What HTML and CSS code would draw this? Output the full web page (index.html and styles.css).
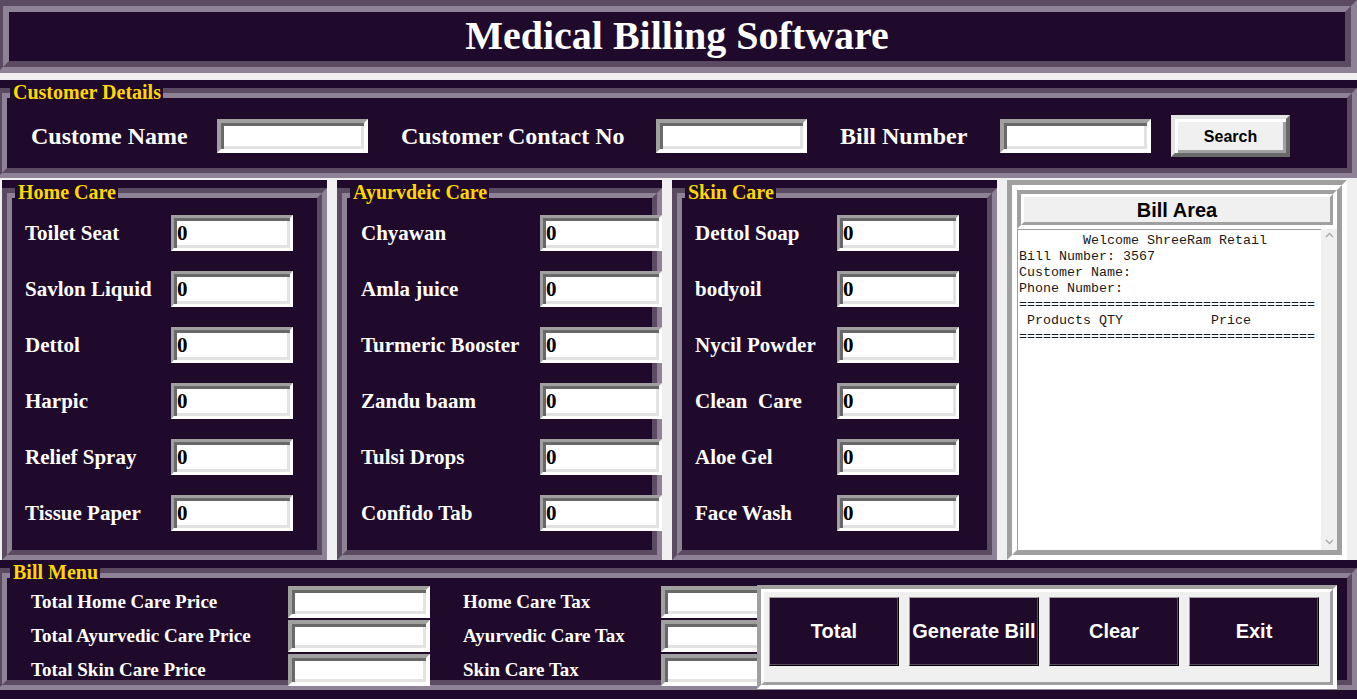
FILE: index.html
```html
<!DOCTYPE html>
<html>
<head>
<meta charset="utf-8">
<title>Medical Billing Software</title>
<link rel="stylesheet" href="styles.css">
</head>
<body>
<div class="app">
  <header class="title"><div class="title-in">Medical Billing Software</div></header>

  <section class="lf cust">
    <span class="lf-label">Customer Details</span>
    <div class="g-out"><div class="g-in cust-row">
      <span class="c-lbl c-l1">Custome Name</span><input class="ent ent-c" type="text">
      <span class="c-lbl c-l2">Customer Contact No</span><input class="ent ent-c" type="text">
      <span class="c-lbl c-l3">Bill Number</span><input class="ent ent-c" type="text">
      <button class="search">Search</button>
    </div></div>
  </section>

  <div class="middle">
    <section class="lf prod home">
      <span class="lf-label">Home Care</span>
      <div class="g-out"><div class="g-in rows">
        <div class="row"><span class="p-lbl">Toilet Seat</span><input class="ent ent-p" value="0"></div>
        <div class="row"><span class="p-lbl">Savlon Liquid</span><input class="ent ent-p" value="0"></div>
        <div class="row"><span class="p-lbl">Dettol</span><input class="ent ent-p" value="0"></div>
        <div class="row"><span class="p-lbl">Harpic</span><input class="ent ent-p" value="0"></div>
        <div class="row"><span class="p-lbl">Relief Spray</span><input class="ent ent-p" value="0"></div>
        <div class="row"><span class="p-lbl">Tissue Paper</span><input class="ent ent-p" value="0"></div>
      </div></div>
    </section>
    <section class="lf prod ayur">
      <span class="lf-label">Ayurvdeic Care</span>
      <div class="g-out"><div class="g-in rows">
        <div class="row"><span class="p-lbl">Chyawan</span><input class="ent ent-p" value="0"></div>
        <div class="row"><span class="p-lbl">Amla juice</span><input class="ent ent-p" value="0"></div>
        <div class="row"><span class="p-lbl">Turmeric Booster</span><input class="ent ent-p" value="0"></div>
        <div class="row"><span class="p-lbl">Zandu baam</span><input class="ent ent-p" value="0"></div>
        <div class="row"><span class="p-lbl">Tulsi Drops</span><input class="ent ent-p" value="0"></div>
        <div class="row"><span class="p-lbl">Confido Tab</span><input class="ent ent-p" value="0"></div>
      </div></div>
    </section>
    <section class="lf prod skin">
      <span class="lf-label">Skin Care</span>
      <div class="g-out"><div class="g-in rows">
        <div class="row"><span class="p-lbl">Dettol Soap</span><input class="ent ent-p" value="0"></div>
        <div class="row"><span class="p-lbl">bodyoil</span><input class="ent ent-p" value="0"></div>
        <div class="row"><span class="p-lbl">Nycil Powder</span><input class="ent ent-p" value="0"></div>
        <div class="row"><span class="p-lbl">Clean  Care</span><input class="ent ent-p" value="0"></div>
        <div class="row"><span class="p-lbl">Aloe Gel</span><input class="ent ent-p" value="0"></div>
        <div class="row"><span class="p-lbl">Face Wash</span><input class="ent ent-p" value="0"></div>
      </div></div>
    </section>
    <section class="bill">
      <div class="bill-in">
        <div class="bill-title"><div class="bill-title-in">Bill Area</div></div>
        <div class="bill-body">
          <div class="txt">        Welcome ShreeRam Retail
Bill Number: 3567
Customer Name:
Phone Number:
=====================================
 Products QTY           Price
=====================================</div>
          <div class="sb">
            <svg width="9" height="6" viewBox="0 0 9 6"><polyline points="1,5 4.5,1.5 8,5" fill="none" stroke="#a8a8a8" stroke-width="1.3"/></svg>
            <svg width="9" height="6" viewBox="0 0 9 6"><polyline points="1,1 4.5,4.5 8,1" fill="none" stroke="#a8a8a8" stroke-width="1.3"/></svg>
          </div>
        </div>
      </div>
    </section>
  </div>

  <section class="lf menu">
    <span class="lf-label">Bill Menu</span>
    <div class="g-out"><div class="g-in menu-in">
      <div class="menu-grid">
        <span class="m-lbl">Total Home Care Price</span><input class="ent ent-m" type="text">
        <span class="m-lbl m-l2">Home Care Tax</span><div class="clip"><input class="ent ent-m" type="text"></div>
        <span class="m-lbl">Total Ayurvedic Care Price</span><input class="ent ent-m" type="text">
        <span class="m-lbl m-l2">Ayurvedic Care Tax</span><div class="clip"><input class="ent ent-m" type="text"></div>
        <span class="m-lbl">Total Skin Care Price</span><input class="ent ent-m" type="text">
        <span class="m-lbl m-l2">Skin Care Tax</span><div class="clip"><input class="ent ent-m" type="text"></div>
      </div>
      <div class="btns"><div class="btns-in">
        <button class="btn">Total</button>
        <button class="btn">Generate Bill</button>
        <button class="btn">Clear</button>
        <button class="btn">Exit</button>
      </div></div>
    </div></div>
  </section>
</div>
</body>
</html>
```

FILE: styles.css
```css
html, body {
  margin: 0;
  padding: 0;
}
body {
  background: #f0f0f0;
  width: 1357px;
  height: 699px;
  overflow: hidden;
  font-family: "Liberation Serif", "Times New Roman", serif;
}
.app {
  margin-left: -3px;
  width: 1360px;
  height: 700px;
}

/* title */
.title {
  border: 6px solid;
  border-color: #5a4a62 #8e8296 #8e8296 #5a4a62;
}
.title-in {
  border: 6px solid;
  border-color: #8e8296 #5a4a62 #5a4a62 #8e8296;
  height: 49px;
  line-height: 49px;
  background: #1f0a2b;
  color: #ffffff;
  text-align: center;
  font: bold 40px "Liberation Serif", serif;
}

/* label frames */
.lf {
  position: relative;
  background: #1f0a2b;
  padding-top: 8px;
  overflow: hidden;
  box-sizing: border-box;
}
.lf-label {
  position: absolute;
  left: 13px;
  top: 1px;
  z-index: 2;
  line-height: 23px;
  padding: 0 2px 0 3px;
  background: #1f0a2b;
  color: #ffd700;
  font: bold 20px "Liberation Serif", serif;
  white-space: pre;
}
.g-out {
  border: 5px solid;
  border-color: #5a4a62 #8e8296 #8e8296 #5a4a62;
}
.g-in {
  border: 5px solid;
  border-color: #8e8296 #5a4a62 #5a4a62 #8e8296;
}

/* entries */
.ent {
  box-sizing: border-box;
  display: block;
  margin: 0;
  padding: 0;
  outline: none;
  background: #ffffff;
  border: 4px solid;
  border-color: #a0a0a0 #ffffff #ffffff #a0a0a0;
  box-shadow: inset 3px 3px 0 #696969, inset -3px -3px 0 #e3e3e3;
  flex-shrink: 0;
  color: #000;
}

/* customer */
.cust {
  margin-top: 7px;
  height: 98px;
}
.cust-row {
  display: flex;
  align-items: center;
  height: 64px;
  padding-top: 6px;
}
.c-lbl {
  color: #ffffff;
  font: bold 24px "Liberation Serif", serif;
  white-space: nowrap;
  flex-shrink: 0;
}
.c-l1 { margin-left: 24px; width: 186px; }
.c-l2 { margin-left: 33px; width: 255px; }
.c-l3 { margin-left: 33px; width: 160px; }
.ent-c {
  width: 151px;
  height: 34px;
}
.search {
  margin: 0 0 0 20px;
  padding: 1px 0 0 0;
  width: 119px;
  height: 42px;
  box-sizing: border-box;
  background: #f0f0f0;
  border: 4px solid;
  border-color: #e3e3e3 #696969 #696969 #e3e3e3;
  box-shadow: inset 3px 3px 0 #ffffff, inset -3px -3px 0 #a0a0a0;
  font: bold 16px "Liberation Sans", Arial, sans-serif;
  color: #000;
}

/* middle */
.middle {
  display: flex;
  gap: 10px;
  padding-left: 5px;
  margin-top: 2px;
  height: 380px;
}
.prod {
  width: 325px;
  height: 380px;
  flex-shrink: 0;
}
.prod .g-in.rows {
  box-sizing: border-box;
  height: 362px;
  padding-top: 7px;
}
.row {
  display: flex;
  align-items: center;
  height: 56px;
}
.p-lbl {
  color: #ffffff;
  font: bold 21px "Liberation Serif", serif;
  white-space: pre;
  flex-shrink: 0;
}
.home .p-lbl { margin-left: 13px; width: 146px; }
.ayur .p-lbl { margin-left: 14px; width: 179px; }
.skin .p-lbl { margin-left: 13px; width: 142px; }
.ent-p {
  width: 122px;
  height: 36px;
  border-width: 3px;
  padding-left: 3px;
  font: bold 21px "Liberation Serif", serif;
}

/* bill area */
.bill {
  width: 340px;
  height: 380px;
  flex-shrink: 0;
  box-sizing: border-box;
  border: 5px solid;
  border-color: #a0a0a0 #ffffff #ffffff #a0a0a0;
}
.bill-in {
  height: 370px;
  box-sizing: border-box;
  border: 5px solid;
  border-color: #ffffff #a0a0a0 #a0a0a0 #ffffff;
  background: #f0f0f0;
}
.bill-title {
  border: 4px solid;
  border-color: #a0a0a0 #ffffff #ffffff #a0a0a0;
}
.bill-title-in {
  border: 3px solid;
  border-color: #ffffff #a0a0a0 #a0a0a0 #ffffff;
  height: 23px;
  padding-top: 2px;
  line-height: 23px;
  text-align: center;
  font: bold 20px "Liberation Sans", Arial, sans-serif;
  color: #000;
}
.bill-body {
  display: flex;
  height: 321px;
}
.txt {
  flex: 1;
  background: #ffffff;
  border-top: 1px solid #a0a0a0;
  border-left: 1px solid #a0a0a0;
  padding: 3px 0 0 1px;
  font: 13.33px "Liberation Mono", "Courier New", monospace;
  line-height: 16px;
  white-space: pre;
  color: #1a1a1a;
  overflow: hidden;
}
.sb {
  width: 16px;
  background: #f0f0f0;
  display: flex;
  flex-direction: column;
  justify-content: space-between;
  align-items: center;
  padding: 3px 0 5px 0;
  box-sizing: border-box;
}
.sb svg { display: block; }

/* bill menu */
.menu {
  height: 140px;
}
.menu-in {
  display: flex;
  align-items: flex-start;
  height: 112px;
  padding-top: 7px;
  box-sizing: border-box;
}
.menu-grid {
  display: grid;
  grid-template-columns: 257px 142px 231px 96px;
  grid-auto-rows: 34px;
  align-items: center;
  margin-left: 24px;
}
.m-lbl {
  color: #ffffff;
  font: bold 19px "Liberation Serif", serif;
  white-space: nowrap;
}
.m-l2 { padding-left: 33px; }
.ent-m {
  width: 142px;
  height: 32px;
}
.clip {
  width: 96px;
  height: 32px;
  overflow: hidden;
}
.btns {
  width: 580px;
  height: 104px;
  box-sizing: border-box;
  border: 4px solid;
  border-color: #a0a0a0 #ffffff #ffffff #a0a0a0;
  flex-shrink: 0;
}
.btns-in {
  height: 96px;
  box-sizing: border-box;
  border: 3px solid;
  border-color: #ffffff #a0a0a0 #a0a0a0 #ffffff;
  background: #f0f0f0;
  display: flex;
  gap: 10px;
  padding: 5px 0 0 5px;
}
.btn {
  width: 130px;
  height: 69px;
  margin: 0;
  padding: 0;
  box-sizing: border-box;
  background: #1f0a2b;
  color: #ffffff;
  border: 1px solid;
  border-color: #a0a0a0 #000000 #000000 #a0a0a0;
  box-shadow: inset -1px -1px 0 #5a4a62;
  font: bold 20px "Liberation Sans", Arial, sans-serif;
}
```
